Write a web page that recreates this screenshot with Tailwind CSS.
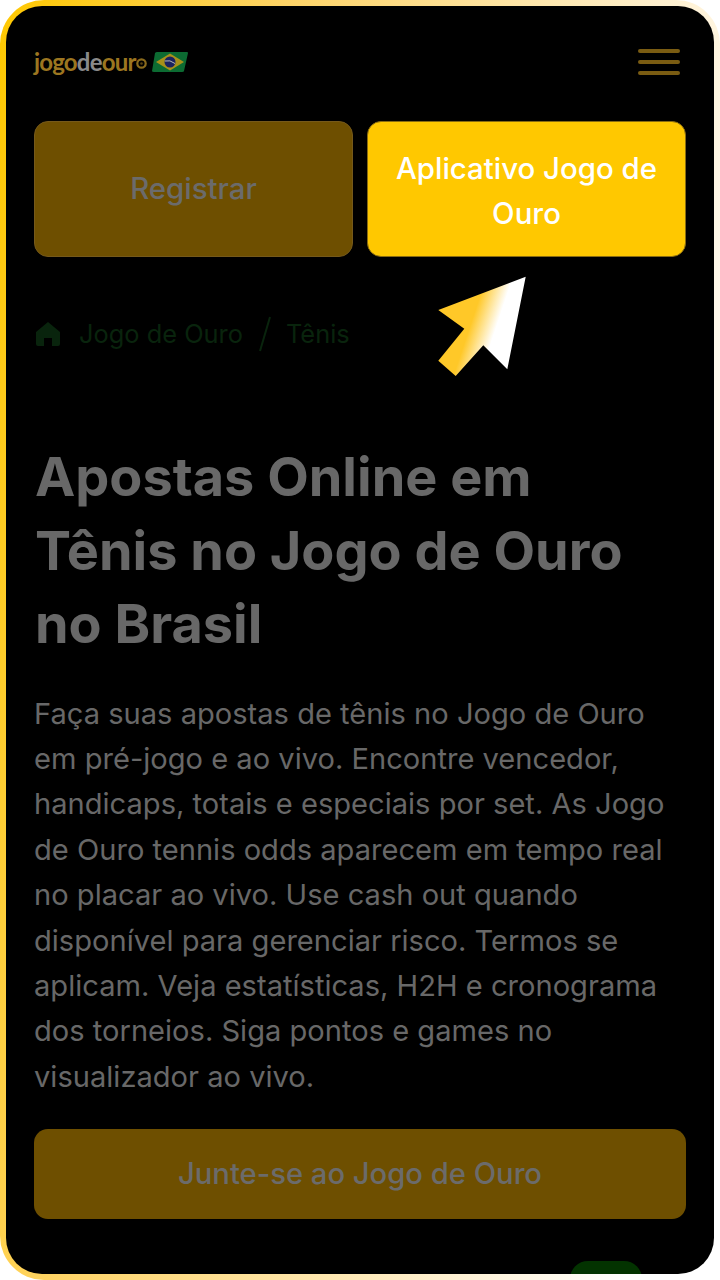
<!DOCTYPE html>
<html lang="pt-BR">
<head>
    <meta charset="UTF-8">
    <meta name="viewport" content="width=device-width, initial-scale=1.0">
    <title>Jogo de Ouro - Tênis</title>
    <script src="https://cdn.jsdelivr.net/npm/@tailwindcss/browser@4"></script>
</head>
<body class="bg-white font-['Inter',sans-serif]">
    <!-- moldura com gradiente -->
    <div class="relative w-[720px] h-[1280px] overflow-hidden bg-white">
        <div class="w-[720px] h-[1280px] rounded-[44px] bg-[linear-gradient(100deg,#ffc800_0%,#ffd466_30%,#fff4dc_75%,#ffffff_90%)] p-[6px]">
            <div class="relative w-full h-full rounded-[36px] bg-black overflow-hidden px-[28px]">

                <!-- topo -->
                <div class="flex items-center justify-between h-[112px] mb-[3px]">
                    <div class="flex items-center gap-[5px]">
                        <span class="flex items-center font-['Lato',sans-serif] font-bold text-[24px] leading-none tracking-[-0.8px] text-[#9c7620]">jogo<span class="text-[#8a8a8a]">de</span>our<svg class="mt-[2px]" width="11" height="11" viewBox="0 0 11 11"><circle cx="5.5" cy="5.5" r="4.2" fill="none" stroke="#8a6a1c" stroke-width="2.2"/><circle cx="5.5" cy="5.5" r="1.3" fill="#5a4412"/></svg></span>
                        <svg width="36" height="22" viewBox="0 0 36 22">
                            <path d="M5 1 H35 Q36 1 36 2 L32 20 Q32 21 30 21 H2 Q0 21 0 20 L3 2 Q4 1 5 1Z" fill="#0c6b32"/>
                            <path d="M18 2.5 L32 11 L18 19.5 L4 11Z" fill="#a8901a"/>
                            <circle cx="18" cy="11" r="5.5" fill="#1c2260"/>
                            <path d="M12.8 10 Q18 8.5 23 12.5" stroke="#b8b8b8" stroke-width="1" fill="none"/>
                        </svg>
                    </div>
                    <div class="flex flex-col gap-[7px] mr-[6px]">
                        <div class="w-[42px] h-[4px] rounded-full bg-[#7a5c12]"></div>
                        <div class="w-[42px] h-[4px] rounded-full bg-[#7a5c12]"></div>
                        <div class="w-[42px] h-[4px] rounded-full bg-[#7a5c12]"></div>
                    </div>
                </div>

                <!-- botões -->
                <div class="flex gap-[14px] w-[652px]">
                    <div class="w-[319px] h-[136px] rounded-[14px] bg-[#6e4f00] border border-[#75591a] flex items-center justify-center text-center text-[29.4px] font-medium text-[#6b6b6b]">Registrar</div>
                    <div class="w-[319px] h-[136px] rounded-[14px] bg-[#ffc800] border border-[#8a6c10] flex items-center justify-center text-center text-[29.4px] leading-[45px] font-medium text-white px-[20px] pt-[3px]">Aplicativo Jogo de Ouro</div>
                </div>

                <!-- breadcrumb -->
                <div class="flex items-center mt-[57px] h-[40px] text-[25.4px] text-[#09240d]">
                    <svg class="w-[26px] h-[26px] mr-[18px] ml-[1px]" viewBox="0 0 26 26"><path d="M13 1 L25 11 V23 Q25 25 23 25 H17 V17 H9 V25 H3 Q1 25 1 23 V11Z" fill="#09240d"/></svg>
                    <span>Jogo de Ouro</span>
                    <svg class="w-[14px] h-[36px] ml-[15px] mr-[14px]" viewBox="0 0 14 36"><path d="M12 1 L2 35" stroke="#09240d" stroke-width="2"/></svg>
                    <span>Tênis</span>
                </div>

                <!-- título -->
                <h1 class="mt-[86px] text-[54px] leading-[73.5px] font-bold text-[#686868] pl-[1px]">Apostas Online em<br>Tênis no Jogo de Ouro<br>no Brasil</h1>

                <!-- texto -->
                <p class="mt-[30px] text-[29.1px] leading-[45.4px] text-[#686868] w-[652px]">Faça suas apostas de tênis no Jogo de Ouro em pré-jogo e ao vivo. Encontre vencedor, handicaps, totais e especiais por set. As Jogo de Ouro tennis odds aparecem em tempo real no placar ao vivo. Use cash out quando disponível para gerenciar risco. Termos se aplicam. Veja estatísticas, H2H e cronograma dos torneios. Siga pontos e games no visualizador ao vivo.</p>

                <!-- botão -->
                <div class="mt-[30px] w-[652px] h-[90px] rounded-[14px] bg-[#6e4f00] flex items-center justify-center text-[29.2px] font-medium text-[#6b6b6b]">Junte-se ao Jogo de Ouro</div>

                <!-- botão flutuante -->
                <div class="absolute left-[564px] top-[1255px] w-[72px] h-[60px] rounded-[18px] bg-[#033300]"></div>

                <!-- seta -->
                <svg class="absolute left-[420px] top-[258px]" width="110" height="122" viewBox="426 264 110 122">
                    <defs>
                        <linearGradient id="seta" x1="480" y1="296" x2="504" y2="304" gradientUnits="userSpaceOnUse">
                            <stop offset="0" stop-color="#ffc828"/>
                            <stop offset="1" stop-color="#ffffff"/>
                        </linearGradient>
                    </defs>
                    <polygon points="525.7,276.7 438.3,310 464.3,328.7 438.3,360.7 455.7,376 483.3,345.3 507.3,369.3" fill="url(#seta)"/>
                </svg>
            </div>
        </div>
    </div>
</body>
</html>
